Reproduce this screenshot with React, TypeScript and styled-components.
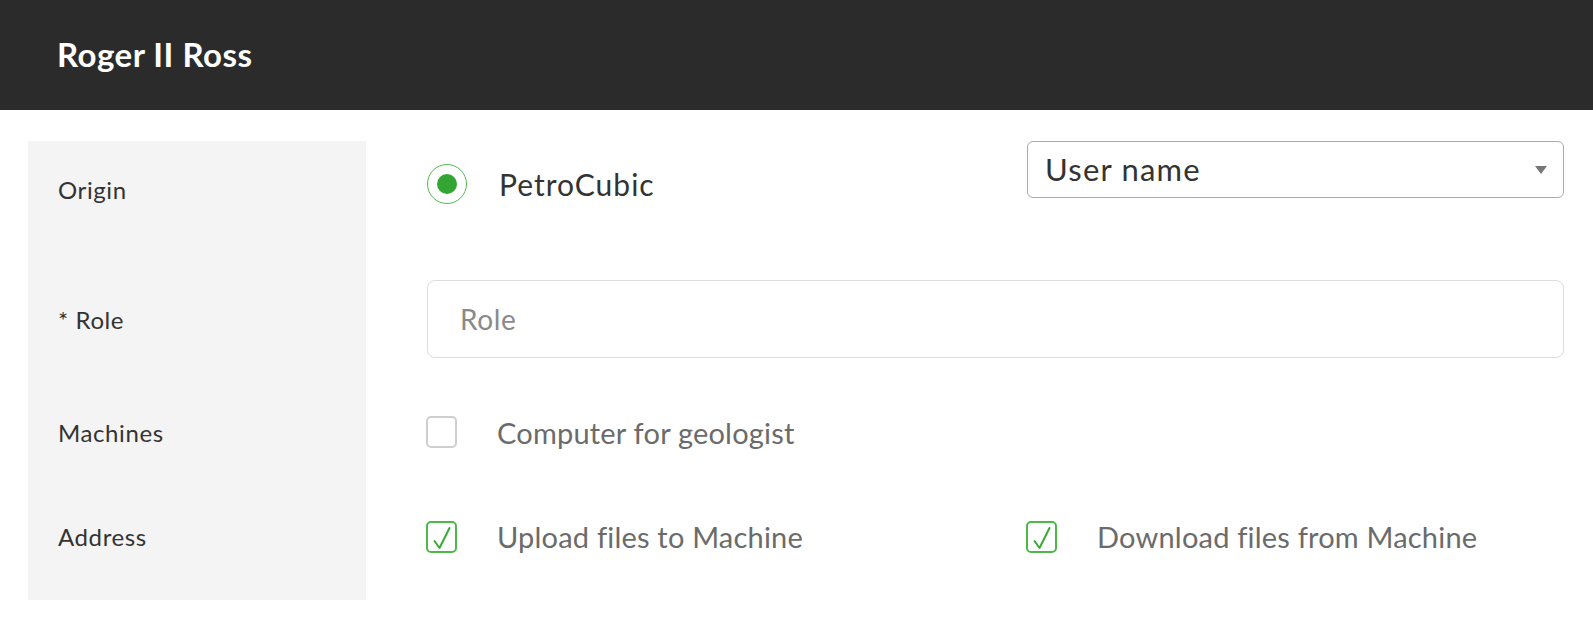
import React from "react";
import styled, { createGlobalStyle } from "styled-components";

const GlobalStyle = createGlobalStyle`
  html, body {
    margin: 0;
    padding: 0;
    background: #ffffff;
  }
  body {
    font-family: "Lato", "Open Sans", sans-serif;
    color: #333333;
  }
`;

const green = "#3aaa35";

export default function App() {
  return (
    <>
      <GlobalStyle />
      <Header>
        <Title>Roger II Ross</Title>
      </Header>
      <Form onSubmit={(e) => e.preventDefault()}>
        <LabelCell>Origin</LabelCell>
        <ContentCell $align="flex-start">
          <Option $grow $gap={32}>
            <Radio>
              <RadioDot />
            </Radio>
            <OptionText $dark>PetroCubic</OptionText>
          </Option>
          <Select>
            <SelectText>User name</SelectText>
            <Caret />
          </Select>
        </ContentCell>

        <LabelCell>* Role</LabelCell>
        <ContentCell>
          <TextInput placeholder="Role" />
        </ContentCell>

        <LabelCell>Machines</LabelCell>
        <ContentCell>
          <Option>
            <CheckBox />
            <OptionText>Computer for geologist</OptionText>
          </Option>
        </ContentCell>

        <LabelCell $offset={10}>Address</LabelCell>
        <ContentCell $offset={10}>
          <Option $width="600px">
            <CheckBox $checked>
              <CheckMark />
            </CheckBox>
            <OptionText>Upload files to Machine</OptionText>
          </Option>
          <Option>
            <CheckBox $checked>
              <CheckMark />
            </CheckBox>
            <OptionText>Download files from Machine</OptionText>
          </Option>
        </ContentCell>
      </Form>
    </>
  );
}

const CheckMark = () => (
  <svg width="22" height="26" viewBox="0 0 22 26" fill="none">
    <path
      d="M3.5 16 L8.5 23 L18.5 3"
      stroke={green}
      strokeWidth="2"
      strokeLinecap="round"
      strokeLinejoin="round"
    />
  </svg>
);

const Header = styled.header`
  height: 110px;
  background: #2b2b2b;
  display: flex;
  align-items: center;
  padding-left: 57px;
  box-sizing: border-box;
`;

const Title = styled.h1`
  margin: 0 0 2px;
  font-family: "Lato", sans-serif;
  font-weight: 700;
  font-size: 33px;
  letter-spacing: 0.5px;
  color: #ffffff;
`;

const Form = styled.form`
  display: grid;
  grid-template-columns: 338px 1fr;
  grid-template-rows: 96px 164px 62px 137px;
  column-gap: 61px;
  padding: 31px 29px 0 28px;
`;

const LabelCell = styled.div<{ $offset?: number }>`
  background: #f4f4f4;
  display: flex;
  align-items: center;
  padding: ${(p) => p.$offset ?? 0}px 0 0 30px;
  font-size: 24px;
  letter-spacing: 0.6px;
  color: #333333;
`;

const ContentCell = styled.div<{ $align?: string; $offset?: number }>`
  display: flex;
  align-items: ${(p) => p.$align ?? "center"};
  padding-top: ${(p) => p.$offset ?? 0}px;
`;

const Option = styled.label<{ $grow?: boolean; $width?: string; $gap?: number }>`
  display: flex;
  align-items: center;
  gap: ${(p) => p.$gap ?? 40}px;
  ${(p) => (p.$grow ? "flex: 1; margin-top: 23px;" : "")}
  ${(p) => (p.$width ? `width: ${p.$width};` : "")}
`;

const Radio = styled.span`
  width: 40px;
  height: 40px;
  box-sizing: border-box;
  border: 1.5px solid #56b952;
  border-radius: 50%;
  display: flex;
  align-items: center;
  justify-content: center;
  flex-shrink: 0;
`;

const RadioDot = styled.span`
  width: 20px;
  height: 20px;
  border-radius: 50%;
  background: #33a532;
`;

const CheckBox = styled.span<{ $checked?: boolean }>`
  width: 31px;
  height: 32px;
  box-sizing: border-box;
  border: 2px solid ${(p) => (p.$checked ? "#4cb848" : "#cfcfcf")};
  border-radius: 5px;
  display: flex;
  align-items: flex-end;
  justify-content: center;
  flex-shrink: 0;
  margin-left: -1px;
`;

const OptionText = styled.span<{ $dark?: boolean }>`
  font-size: ${(p) => (p.$dark ? 30 : 29)}px;
  letter-spacing: ${(p) => (p.$dark ? 1 : 0.2)}px;
  color: ${(p) => (p.$dark ? "#333333" : "#6b6b6b")};
`;

const Select = styled.div`
  width: 537px;
  height: 57px;
  box-sizing: border-box;
  border: 1.5px solid #aaaaaa;
  border-radius: 6px;
  display: flex;
  align-items: center;
  justify-content: space-between;
  padding: 0 16px 0 17px;
`;

const SelectText = styled.span`
  font-size: 31px;
  letter-spacing: 1.2px;
  color: #333333;
  margin-bottom: 2px;
`;

const Caret = styled.span`
  width: 0;
  height: 0;
  border-left: 6px solid transparent;
  border-right: 6px solid transparent;
  border-top: 8px solid #777777;
`;

const TextInput = styled.input`
  width: 100%;
  height: 78px;
  box-sizing: border-box;
  border: 1.5px solid #dddddd;
  border-radius: 8px;
  padding: 0 32px;
  font-family: "Lato", sans-serif;
  font-size: 28px;
  letter-spacing: 0.6px;
  color: #333333;
  outline: none;
  &::placeholder {
    color: #8a8a8a;
  }
`;
